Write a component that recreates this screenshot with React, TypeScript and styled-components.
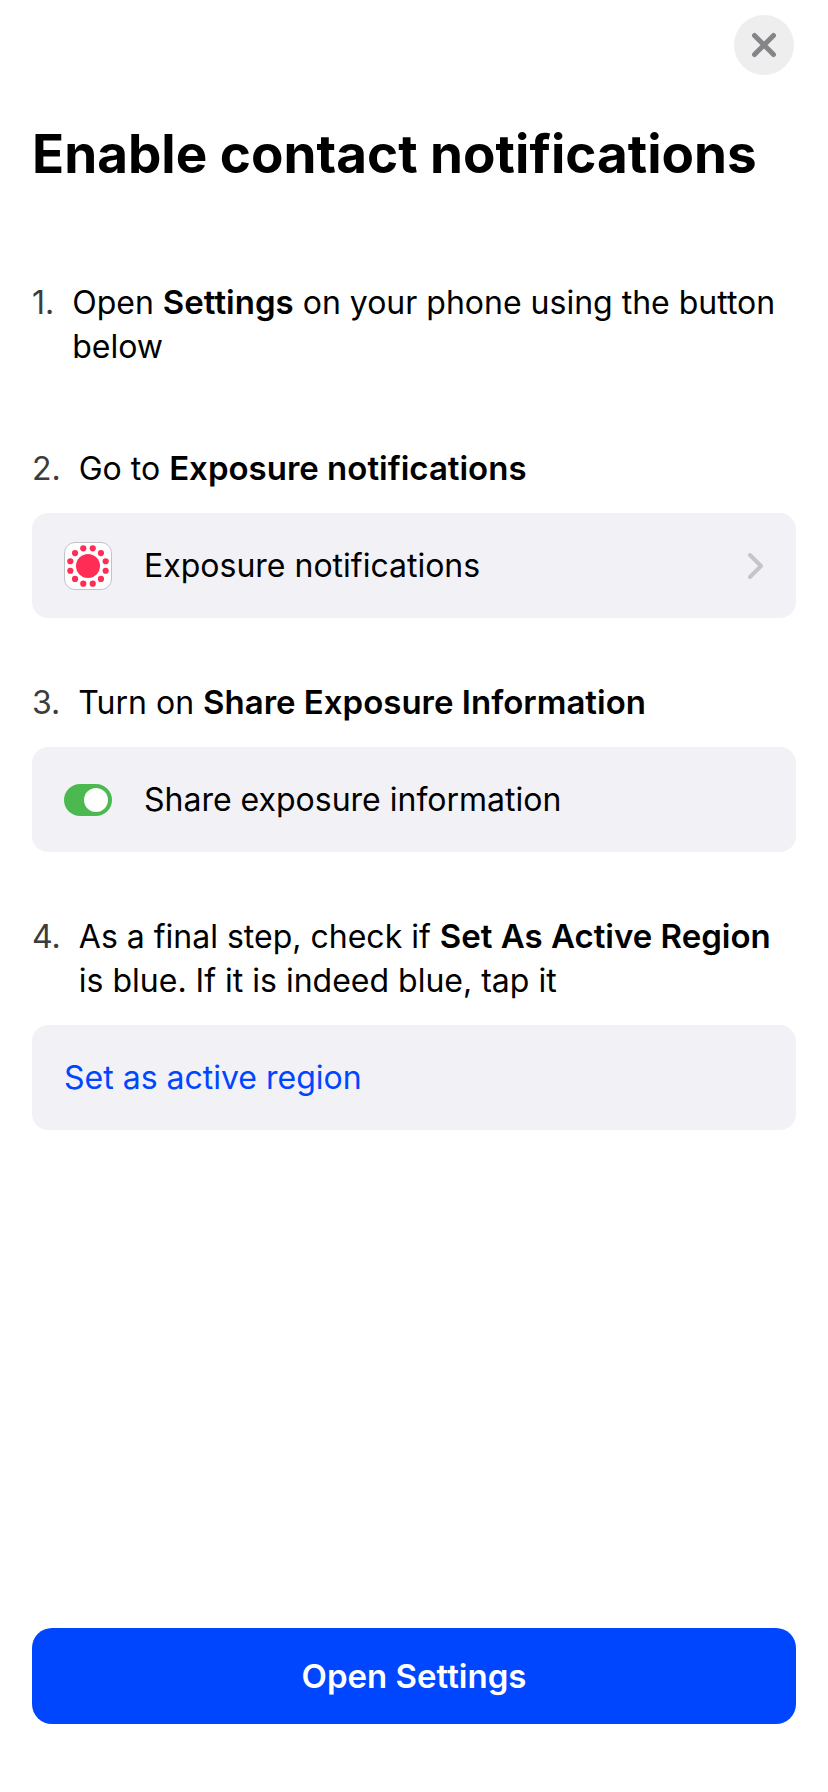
import React from "react";
import styled, { createGlobalStyle } from "styled-components";

const GlobalStyle = createGlobalStyle`
  *, *::before, *::after { box-sizing: border-box; }
  body { margin: 0; background: #fff; color: #000; font-family: Inter, "Liberation Sans", sans-serif; }
`;

const Screen = styled.main`
  display: flex;
  flex-direction: column;
  min-height: 100vh;
  padding: 15px 32px 68px;
`;

const CloseButton = styled.button`
  display: grid;
  place-items: center;
  align-self: flex-end;
  width: 60px;
  height: 60px;
  margin-right: 2px;
  padding: 0;
  border: 0;
  border-radius: 50%;
  background: #eeeeee;
`;

const Title = styled.h1`
  margin: 45px 0 0;
  font-size: 53px;
  line-height: 68px;
  font-weight: 700;
`;

const Steps = styled.ol`
  display: flex;
  flex-direction: column;
  gap: 63px;
  margin: 93px 0 0;
  padding: 0;
  list-style: none;
`;

const Step = styled.li<{ $textOnly?: boolean }>`
  padding-bottom: ${(p) => (p.$textOnly ? 15 : 0)}px;
`;

const StepText = styled.div`
  display: flex;
  gap: 18px;
  font-size: 32px;
  line-height: 44px;
`;

const StepNumber = styled.span`
  color: #3c3c3c;
`;

const Strong = styled.strong`
  font-size: 33px;
  line-height: 40px;
  font-weight: 600;
`;

const Card = styled.div`
  display: flex;
  align-items: center;
  gap: 32px;
  min-height: 105px;
  margin-top: 22px;
  padding: 0 32px;
  border-radius: 16px;
  background: #f2f1f6;
  font-size: 32px;
  line-height: 44px;
`;

const CardLabel = styled.span`
  flex: 1;
`;

const RegionLink = styled.a`
  color: #0046ff;
  text-decoration: none;
`;

const Switch = styled.input`
  appearance: none;
  display: flex;
  align-items: center;
  justify-content: flex-start;
  width: 48px;
  height: 32px;
  margin: 0;
  padding: 4px;
  border-radius: 16px;
  background: #c7c7cc;
  &:checked {
    justify-content: flex-end;
    background: #4cb950;
  }
  &::before {
    content: "";
    width: 24px;
    height: 24px;
    border-radius: 50%;
    background: #fff;
  }
`;

const PrimaryButton = styled.button`
  height: 96px;
  margin-top: auto;
  border: 0;
  border-radius: 20px;
  background: #0046ff;
  color: #fff;
  font-family: inherit;
  font-size: 33px;
  font-weight: 600;
`;

const dots = Array.from({ length: 12 }, (_, i) => {
  const a = ((i * 30 + 15) * Math.PI) / 180;
  return { cx: 24 + 18.3 * Math.cos(a), cy: 24 + 18.3 * Math.sin(a) };
});

const ExposureIcon = () => (
  <svg width="48" height="48" viewBox="0 0 48 48" aria-hidden="true">
    <rect x="0.5" y="0.5" width="47" height="47" rx="10.5" fill="#fff" stroke="#c3c3c7" />
    <circle cx="24" cy="24" r="12" fill="#ff2d55" />
    {dots.map((d, i) => (
      <circle key={i} cx={d.cx} cy={d.cy} r="3.1" fill="#ff2d55" />
    ))}
  </svg>
);

const Chevron = () => (
  <svg width="17" height="28" viewBox="0 0 17 28" fill="none" aria-hidden="true">
    <path d="M3 3 14 14 3 25" stroke="#c5c5c7" strokeWidth="4" strokeLinecap="round" strokeLinejoin="round" />
  </svg>
);

export default function App() {
  return (
    <Screen>
      <GlobalStyle />
      <CloseButton aria-label="Close">
        <svg width="26" height="26" viewBox="0 0 26 26" fill="none" stroke="#858489" strokeWidth="5" strokeLinecap="round">
          <path d="M3.5 3.5 22.5 22.5M22.5 3.5 3.5 22.5" />
        </svg>
      </CloseButton>
      <Title>Enable contact notifications</Title>
      <Steps>
        <Step $textOnly>
          <StepText>
            <StepNumber>1.</StepNumber>
            <span>Open <Strong>Settings</Strong> on your phone using the button below</span>
          </StepText>
        </Step>
        <Step>
          <StepText>
            <StepNumber>2.</StepNumber>
            <span>Go to <Strong>Exposure notifications</Strong></span>
          </StepText>
          <Card>
            <ExposureIcon />
            <CardLabel>Exposure notifications</CardLabel>
            <Chevron />
          </Card>
        </Step>
        <Step>
          <StepText>
            <StepNumber>3.</StepNumber>
            <span>Turn on <Strong>Share Exposure Information</Strong></span>
          </StepText>
          <Card>
            <Switch id="share" type="checkbox" role="switch" defaultChecked />
            <CardLabel as="label" htmlFor="share">Share exposure information</CardLabel>
          </Card>
        </Step>
        <Step>
          <StepText>
            <StepNumber>4.</StepNumber>
            <span>As a final step, check if <Strong>Set As Active Region</Strong> is blue. If it is indeed blue, tap it</span>
          </StepText>
          <Card>
            <RegionLink href="#region">Set as active region</RegionLink>
          </Card>
        </Step>
      </Steps>
      <PrimaryButton>Open Settings</PrimaryButton>
    </Screen>
  );
}
